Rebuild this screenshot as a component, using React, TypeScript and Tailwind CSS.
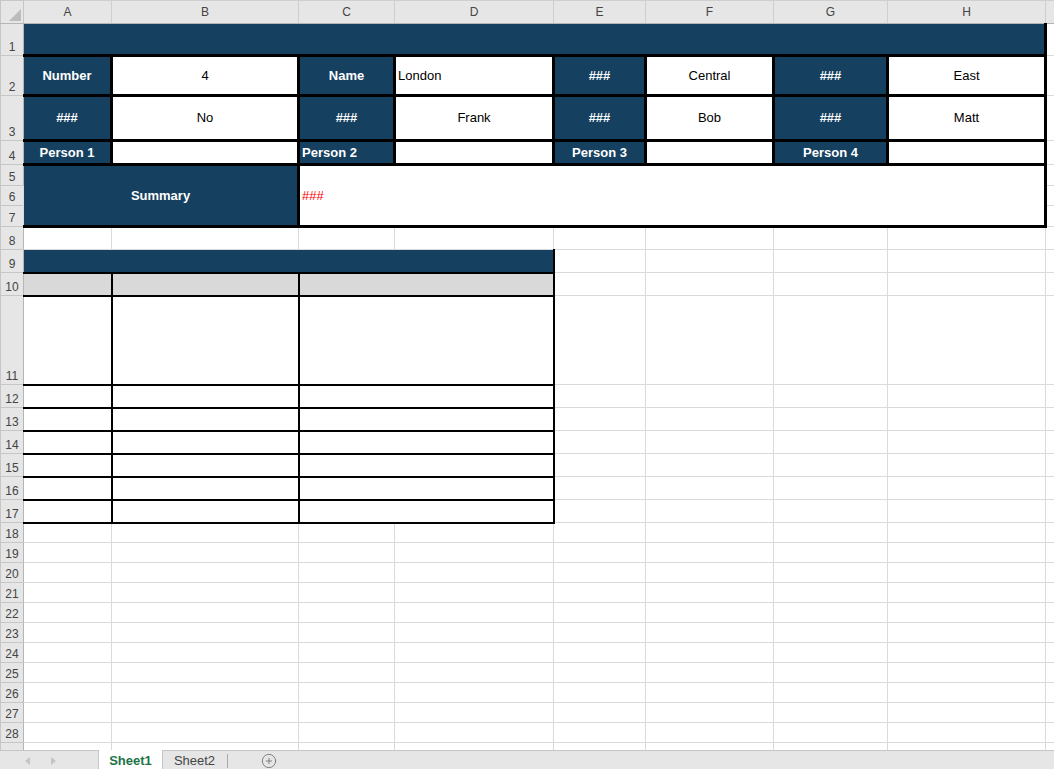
import React from 'react';
import { CirclePlus } from 'lucide-react';

const COL_WIDTHS = [23, 88, 187, 96, 159, 92, 128, 114, 158, 9];
const LETTERS = ['A', 'B', 'C', 'D', 'E', 'F', 'G', 'H', ''];

// cell styles
const grid = 'border border-[#dadada] p-0';
const navy = 'bg-[#15405f] text-white font-bold text-[13px] p-0 align-middle';
const thick = 'border-[3px] border-black';
const firstCol = 'border-l border-l-[#dadada]';
const tbl = 'border-2 border-black p-0';

const RowHead = ({ n }: { n?: number }) => (
    <th className="bg-[#e6e6e6] border border-[#c6c6c6] border-r-[#b5b5b5] p-0 pb-[2px] align-bottom text-center text-[12px] font-normal text-[#444] leading-none">
        {n}
    </th>
);

const Label = ({ text, left, first }: { text: string; left?: boolean; first?: boolean }) => (
    <td className={`${navy} ${thick} ${first ? firstCol : ''} ${left ? 'text-left pl-[2px]' : 'text-center'}`}>
        {text}
    </td>
);

const Value = ({ text, left }: { text?: string; left?: boolean }) => (
    <td className={`${thick} bg-white p-0 text-[13px] text-black align-middle ${left ? 'text-left pl-[2px]' : 'text-center'}`}>
        {text}
    </td>
);

const Blank = ({ count }: { count: number }) => (
    <>
        {Array.from({ length: count }).map((_, i) => (
            <td key={i} className={grid} />
        ))}
    </>
);

const LowerRow = ({ n, h }: { n: number; h: string }) => (
    <tr className={h}>
        <RowHead n={n} />
        <td className={`${tbl} ${firstCol}`} />
        <td className={tbl} />
        <td colSpan={2} className={tbl} />
        <Blank count={5} />
    </tr>
);

export default function App() {
    return (
        <div className="w-[1054px] h-[769px] overflow-hidden bg-white flex flex-col font-['Liberation_Sans',Arial,sans-serif]">
            <div className="h-[750px] flex-none overflow-hidden">
                <table className="table-fixed border-collapse w-[1054px]">
                    <colgroup>
                        {COL_WIDTHS.map((w, i) => (
                            <col key={i} style={{ width: w }} />
                        ))}
                    </colgroup>
                    <tbody>
                        {/* column letters */}
                        <tr className="h-[22px]">
                            <th className="bg-[#e6e6e6] border border-[#c6c6c6] border-b-[#b5b5b5] p-0">
                                <svg width="23" height="22" viewBox="0 0 23 22" className="block">
                                    <polygon points="20,8 20,20 8,20" fill="#bcbcbc" />
                                </svg>
                            </th>
                            {LETTERS.map((l, i) => (
                                <th
                                    key={i}
                                    className="bg-[#e6e6e6] border border-[#cfcfcf] border-b-[#b5b5b5] p-0 text-center text-[12px] font-normal text-[#444] leading-none"
                                >
                                    {l}
                                </th>
                            ))}
                        </tr>

                        {/* title bar */}
                        <tr className="h-[32px]">
                            <RowHead n={1} />
                            <td colSpan={8} className={`bg-[#15405f] ${thick} border-t border-t-[#dadada] ${firstCol}`} />
                            <Blank count={1} />
                        </tr>

                        <tr className="h-[40px]">
                            <RowHead n={2} />
                            <Label text="Number" first />
                            <Value text="4" />
                            <Label text="Name" />
                            <Value text="London" left />
                            <Label text="###" />
                            <Value text="Central" />
                            <Label text="###" />
                            <Value text="East" />
                            <Blank count={1} />
                        </tr>

                        <tr className="h-[45px]">
                            <RowHead n={3} />
                            <Label text="###" first />
                            <Value text="No" />
                            <Label text="###" />
                            <Value text="Frank" />
                            <Label text="###" />
                            <Value text="Bob" />
                            <Label text="###" />
                            <Value text="Matt" />
                            <Blank count={1} />
                        </tr>

                        <tr className="h-[24px]">
                            <RowHead n={4} />
                            <Label text="Person 1" first />
                            <Value />
                            <Label text="Person 2" left />
                            <Value />
                            <Label text="Person 3" />
                            <Value />
                            <Label text="Person 4" />
                            <Value />
                            <Blank count={1} />
                        </tr>

                        {/* summary block */}
                        <tr className="h-[21px]">
                            <RowHead n={5} />
                            <td colSpan={2} rowSpan={3} className={`${navy} ${thick} ${firstCol} text-center`}>
                                Summary
                            </td>
                            <td colSpan={6} rowSpan={3} className={`${thick} bg-white p-0 pl-[2px] text-left align-middle text-[13px] text-[#ff0000]`}>
                                ###
                            </td>
                            <Blank count={1} />
                        </tr>
                        <tr className="h-[20px]">
                            <RowHead n={6} />
                            <Blank count={1} />
                        </tr>
                        <tr className="h-[21px]">
                            <RowHead n={7} />
                            <Blank count={1} />
                        </tr>

                        <tr className="h-[23px]">
                            <RowHead n={8} />
                            <Blank count={9} />
                        </tr>

                        {/* lower table */}
                        <tr className="h-[23px]">
                            <RowHead n={9} />
                            <td colSpan={4} className="bg-[#15405f] p-0 border border-[#dadada] border-r-2 border-b-2 border-r-black border-b-black" />
                            <Blank count={5} />
                        </tr>
                        <tr className="h-[23px]">
                            <RowHead n={10} />
                            <td className={`${tbl} ${firstCol} bg-[#d9d9d9]`} />
                            <td className={`${tbl} bg-[#d9d9d9]`} />
                            <td colSpan={2} className={`${tbl} bg-[#d9d9d9]`} />
                            <Blank count={5} />
                        </tr>
                        <LowerRow n={11} h="h-[89px]" />
                        {[12, 13, 14, 15, 16, 17].map((n) => (
                            <LowerRow key={n} n={n} h="h-[23px]" />
                        ))}

                        {Array.from({ length: 11 }).map((_, i) => (
                            <tr key={i} className="h-[20px]">
                                <RowHead n={18 + i} />
                                <Blank count={9} />
                            </tr>
                        ))}
                        {/* row 29, hidden behind the tab strip */}
                        <tr className="h-[20px]">
                            <RowHead />
                            <Blank count={9} />
                        </tr>
                    </tbody>
                </table>
            </div>

            {/* sheet tabs */}
            <div className="flex-1 flex items-stretch bg-[#e6e6e6] border-t border-[#c6c6c6] text-[13px]">
                <div className="w-[98px] flex items-center gap-[20px] pl-[25px]">
                    <svg width="6" height="8" viewBox="0 0 6 8">
                        <polygon points="5,0 5,8 0,4" fill="#c4c4c4" />
                    </svg>
                    <svg width="6" height="8" viewBox="0 0 6 8">
                        <polygon points="0,0 0,8 5,4" fill="#c4c4c4" />
                    </svg>
                </div>
                <div className="w-[65px] -mt-px bg-white border-x border-[#c6c6c6] flex items-center justify-center font-bold text-[#217346]">
                    Sheet1
                </div>
                <div className="w-[64px] flex items-center justify-center text-[#444]">
                    <span className="pr-[1px]">Sheet2</span>
                </div>
                <div className="w-px bg-[#a8a8a8] my-[3px]" />
                <div className="ml-[33px] flex items-center">
                    <CirclePlus size={16} strokeWidth={1.4} className="text-[#7a7a7a]" />
                </div>
            </div>
        </div>
    );
}
